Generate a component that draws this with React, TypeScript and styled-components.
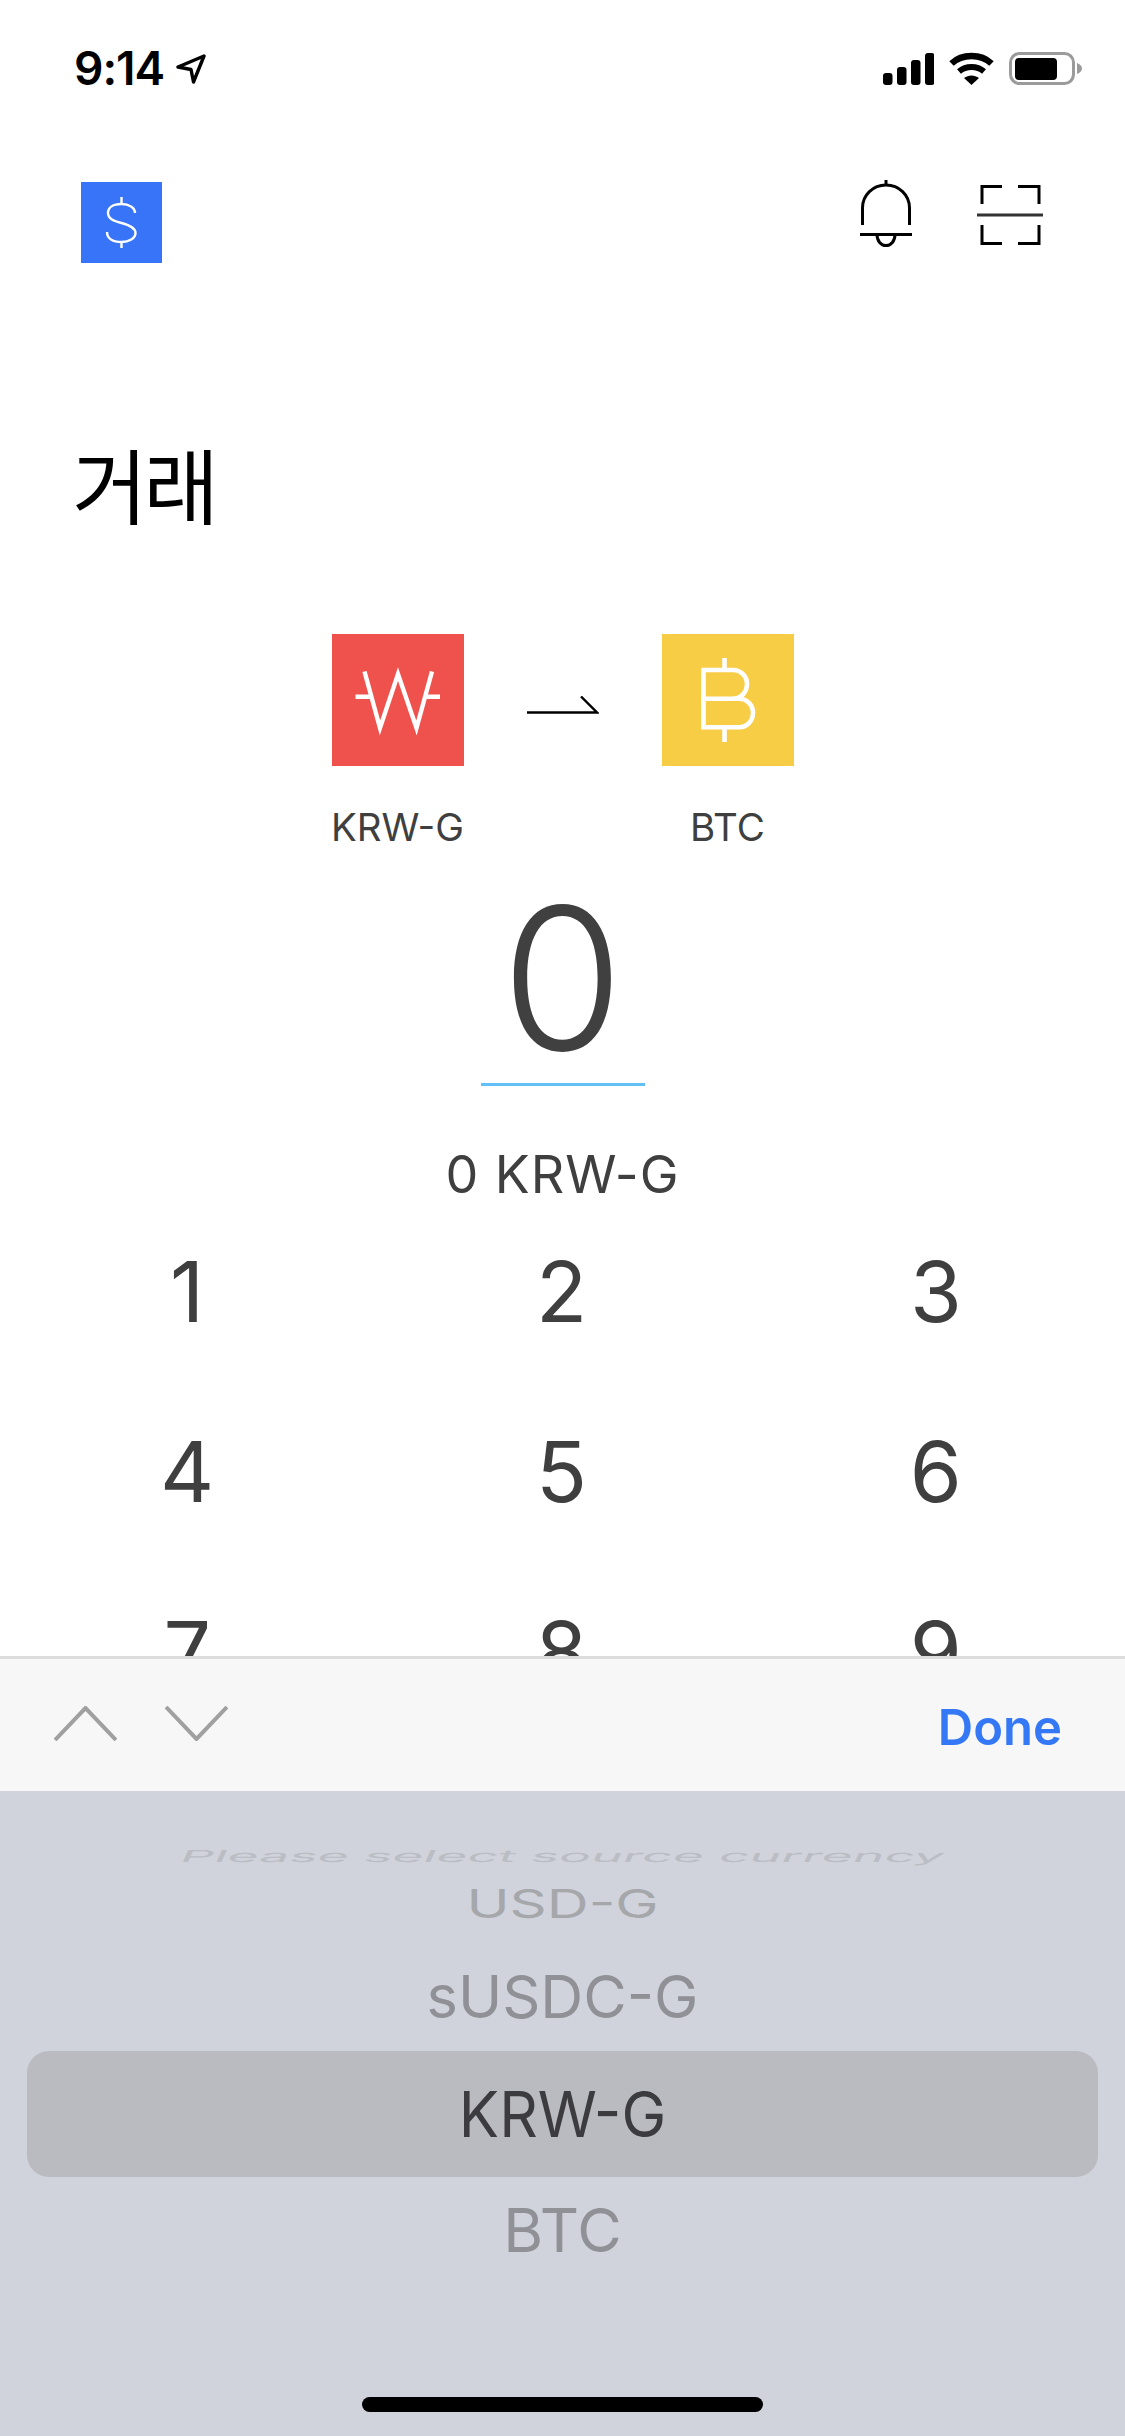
import React from 'react';
import styled, { createGlobalStyle } from 'styled-components';

const GlobalStyle = createGlobalStyle`
  html, body {
    margin: 0;
    padding: 0;
    background: #fff;
  }
  body {
    font-family: Inter, "Noto Sans CJK KR", sans-serif;
  }
`;

const Screen = styled.div`
  width: 1125px;
  height: 2436px;
  display: flex;
  flex-direction: column;
  overflow: hidden;
  background: #fff;
`;

const Main = styled.main`
  height: 1656px;
  flex: none;
  overflow: hidden;
`;

const StatusBar = styled.div`
  height: 33px;
  padding: 52px 43px 0 74px;
  display: flex;
  align-items: center;
  justify-content: space-between;
`;

const Clock = styled.div`
  display: flex;
  align-items: center;
  gap: 12px;
  font-size: 46px;
  font-weight: 600;
  letter-spacing: -1px;
  line-height: 33px;
  color: #000;
`;

const StatusIcons = styled.div`
  display: flex;
  align-items: center;
  gap: 15px;
`;

const NavBar = styled.nav`
  margin-top: 97px;
  padding: 0 82px 0 81px;
  height: 81px;
  display: flex;
  align-items: flex-start;
  justify-content: space-between;
`;

const NavActions = styled.div`
  display: flex;
  align-items: flex-start;
  gap: 65px;
  margin-top: -2px;
  svg:last-child {
    margin-top: 5px;
  }
`;

const Tile = styled.div<{ $bg: string; $size: number }>`
  width: ${p => p.$size}px;
  height: ${p => p.$size}px;
  background: ${p => p.$bg};
  display: block;
  svg {
    display: block;
  }
`;

const Title = styled.h1`
  margin: 178px 0 0;
  padding-left: 72px;
  font-family: "Noto Sans CJK KR", sans-serif;
  font-size: 82px;
  font-weight: 400;
  line-height: 84px;
  letter-spacing: -4px;
  color: #000;
`;

const PairRow = styled.div`
  margin-top: 109px;
  display: flex;
  justify-content: center;
  align-items: flex-start;
  gap: 63px;
`;

const Coin = styled.div`
  width: 132px;
  display: flex;
  flex-direction: column;
  align-items: center;
`;

const CoinLabel = styled.span`
  margin-top: 38px;
  font-size: 38.5px;
  line-height: 46px;
  color: #3f3f3f;
  white-space: nowrap;
`;

const PairArrow = styled.svg`
  margin-top: 62px;
  flex: none;
`;

const AmountBlock = styled.div`
  display: flex;
  flex-direction: column;
  align-items: center;
`;

const AmountValue = styled.div`
  width: 164px;
  height: 209px;
  margin-top: 24px;
  border-bottom: 3px solid #62c0f8;
  text-align: center;
  font-size: 198px;
  font-weight: 300;
  line-height: 209px;
  color: #404040;
`;

const AmountCaption = styled.div`
  margin-top: 59px;
  font-size: 52px;
  line-height: 60px;
  letter-spacing: 1px;
  color: #3f3f3f;
`;

const Keypad = styled.div`
  display: grid;
  grid-template-columns: repeat(3, 1fr);
  grid-auto-rows: 180px;
  margin-top: 37px;
  padding-right: 2px;
`;

const Key = styled.div`
  text-align: center;
  font-size: 84px;
  line-height: 100px;
  color: #3f3f3f;
`;

const Toolbar = styled.div`
  height: 132px;
  flex: none;
  border-top: 3px solid #dcdcdc;
  background: #f7f7f7;
  padding: 0 63px 0 54px;
  display: flex;
  align-items: center;
  justify-content: space-between;
`;

const Steppers = styled.div`
  display: flex;
  gap: 48px;
  margin-top: -3px;
`;

const DoneButton = styled.span`
  margin-top: 5px;
  font-size: 49px;
  font-weight: 600;
  line-height: 60px;
  color: #3478f6;
`;

const Wheel = styled.div`
  flex: 1;
  background: #d0d3db;
  padding-top: 47px;
  display: flex;
  flex-direction: column;
  position: relative;
`;

const WheelRow = styled.div<{ $h: number; $mt?: number; $selected?: boolean }>`
  height: ${p => p.$h}px;
  margin: ${p => p.$mt || 0}px ${p => (p.$selected ? 27 : 0)}px 0;
  border-radius: ${p => (p.$selected ? 22 : 0)}px;
  background: ${p => (p.$selected ? '#babbc0' : 'transparent')};
  display: flex;
  align-items: center;
  justify-content: center;
`;

const WheelLabel = styled.span<{ $color: string; $size: number; $transform: string }>`
  display: block;
  color: ${p => p.$color};
  font-size: ${p => p.$size}px;
  line-height: 1;
  white-space: nowrap;
  transform: ${p => p.$transform};
`;

const HomeBar = styled.div`
  position: absolute;
  left: 362px;
  bottom: 24px;
  width: 401px;
  height: 15px;
  border-radius: 8px;
  background: #000;
`;

const wheelItems = [
  { label: 'Please select source currency', h: 36, mt: 0, size: 52, color: '#babdc3', transform: 'skewX(-24deg) scale(1.03, 0.32)' },
  { label: 'USD-G', h: 60, mt: 0, size: 58, color: '#a5a7ab', transform: 'scaleY(0.68)' },
  { label: 'sUSDC-G', h: 108, mt: 9, size: 59.5, color: '#8f9196', transform: 'none' },
  { label: 'KRW-G', h: 126, mt: 0, size: 60, color: '#3b3b40', transform: 'scaleY(1.06)', selected: true },
  { label: 'BTC', h: 106, mt: 0, size: 61, color: '#8f9196', transform: 'none' },
];

const keys = ['1', '2', '3', '4', '5', '6', '7', '8', '9'];

const LocationIcon = () => (
  <svg width="30" height="30" viewBox="0 0 30 30" fill="none">
    <path d="M28 2 L2 13 L15 15.5 L17.5 28 Z" stroke="#000" strokeWidth="3.4" strokeLinejoin="round" />
  </svg>
);

const SignalIcon = () => (
  <svg width="51" height="32" viewBox="0 0 51 32" fill="#000">
    <rect x="0" y="20" width="9.5" height="12" rx="3" />
    <rect x="14" y="14" width="9.5" height="18" rx="3" />
    <rect x="28" y="7" width="9.5" height="25" rx="3" />
    <rect x="42" y="0" width="9.5" height="32" rx="3" />
  </svg>
);

const WifiIcon = () => (
  <svg width="45" height="33" viewBox="0 0 45 33" fill="none">
    <path d="M2.5 11.5 C13 1.5 32 1.5 42.5 11.5" stroke="#000" strokeWidth="6.4" />
    <path d="M10 19.5 C17 13.5 28 13.5 35 19.5" stroke="#000" strokeWidth="6" />
    <path d="M15 26 C19.5 22.5 25.5 22.5 30 26 L22.5 33 Z" fill="#000" />
  </svg>
);

const BatteryIcon = () => (
  <svg width="73" height="33" viewBox="0 0 73 33" fill="none">
    <rect x="1.5" y="1.5" width="63" height="30" rx="9" stroke="#9b9b9b" strokeWidth="3" />
    <rect x="6" y="6" width="42" height="22" rx="4" fill="#000" />
    <path d="M68 11 C71 12 73 14 73 16.5 C73 19 71 21 68 22 Z" fill="#9b9b9b" />
  </svg>
);

const DollarIcon = () => (
  <svg width="81" height="81" viewBox="0 0 81 81" fill="none" stroke="#fff" strokeWidth="2.4">
    <path d="M54 31 C54 25.5 48 22 40.5 22 C32 22 27 25.5 27 31 C27 37 33 39 40.5 41 C48 43 54.5 45.5 54.5 51 C54.5 56.5 48 60 40.5 60 C32 60 26 56.5 26 50" />
    <path d="M40.5 15 V22 M40.5 60 V66" />
  </svg>
);

const BellIcon = () => (
  <svg width="52" height="67" viewBox="0 0 52 67" fill="none" stroke="#000" strokeWidth="3">
    <path d="M26 0 V5" />
    <path d="M2.5 45 V28 C2.5 15 13 5 26 5 C39 5 49.5 15 49.5 28 V45" />
    <path d="M0 54.5 H52" />
    <path d="M17 54.5 C17 61 21 65.5 26 65.5 C31 65.5 35 61 35 54.5" />
  </svg>
);

const ScanIcon = () => (
  <svg width="66" height="60" viewBox="0 0 66 60" fill="none" stroke="#000" strokeWidth="3">
    <path d="M5 19 V1.5 H25" />
    <path d="M41 1.5 H62 V19" />
    <path d="M0 30 H66" stroke="#333" />
    <path d="M5 40 V58.5 H25" />
    <path d="M41 58.5 H62 V40" />
  </svg>
);

const WonIcon = () => (
  <svg width="132" height="132" viewBox="0 0 132 132" fill="none" stroke="#fff" strokeWidth="4.4">
    <path d="M32.5 37.5 L48 94 L66 40 L84.5 94 L100 37.5" strokeLinejoin="miter" />
    <path d="M23.5 62.7 H38 M95 62.7 H108" />
  </svg>
);

const BitcoinIcon = () => (
  <svg width="132" height="132" viewBox="0 0 132 132" fill="none" stroke="#fff" strokeWidth="4.6">
    <path d="M41.5 36 H71 C79 36 85 42.5 85 50 C85 58 79 64.7 71 64.7 H41.5 Z" />
    <path d="M71 64.7 H77 C85 64.7 91 71 91 79 C91 87 85 93.3 77 93.3 H41.5 V64.7" />
    <path d="M62.5 24 V36 M62.5 93.3 V108" />
  </svg>
);

const ChevronIcon = ({ up }: { up?: boolean }) => (
  <svg width="63" height="35" viewBox="0 0 63 35" fill="none" stroke="#a0a0a0" strokeWidth="4">
    <path d={up ? 'M1 34 L31.5 2 L62 34' : 'M1 1 L31.5 33 L62 1'} />
  </svg>
);

export default function App() {
  return (
    <Screen>
      <GlobalStyle />
      <Main>
        <StatusBar>
          <Clock>
            9:14
            <LocationIcon />
          </Clock>
          <StatusIcons>
            <SignalIcon />
            <WifiIcon />
            <BatteryIcon />
          </StatusIcons>
        </StatusBar>
        <NavBar>
          <Tile $bg="#3874f8" $size={81}>
            <DollarIcon />
          </Tile>
          <NavActions>
            <BellIcon />
            <ScanIcon />
          </NavActions>
        </NavBar>
        <Title>거래</Title>
        <PairRow>
          <Coin>
            <Tile $bg="#ef524c" $size={132}>
              <WonIcon />
            </Tile>
            <CoinLabel>KRW-G</CoinLabel>
          </Coin>
          <PairArrow width="72" height="18" viewBox="0 0 72 18" fill="none" stroke="#000" strokeWidth="2.4">
            <path d="M0 16.5 H70 L54 0.5" />
          </PairArrow>
          <Coin>
            <Tile $bg="#f8cd46" $size={132}>
              <BitcoinIcon />
            </Tile>
            <CoinLabel>BTC</CoinLabel>
          </Coin>
        </PairRow>
        <AmountBlock>
          <AmountValue>0</AmountValue>
          <AmountCaption>0 KRW-G</AmountCaption>
        </AmountBlock>
        <Keypad>
          {keys.map(k => (
            <Key key={k}>{k}</Key>
          ))}
        </Keypad>
      </Main>
      <Toolbar>
        <Steppers>
          <ChevronIcon up />
          <ChevronIcon />
        </Steppers>
        <DoneButton>Done</DoneButton>
      </Toolbar>
      <Wheel>
        {wheelItems.map(item => (
          <WheelRow key={item.label} $h={item.h} $mt={item.mt} $selected={item.selected}>
            <WheelLabel $color={item.color} $size={item.size} $transform={item.transform}>
              {item.label}
            </WheelLabel>
          </WheelRow>
        ))}
        <HomeBar />
      </Wheel>
    </Screen>
  );
}
